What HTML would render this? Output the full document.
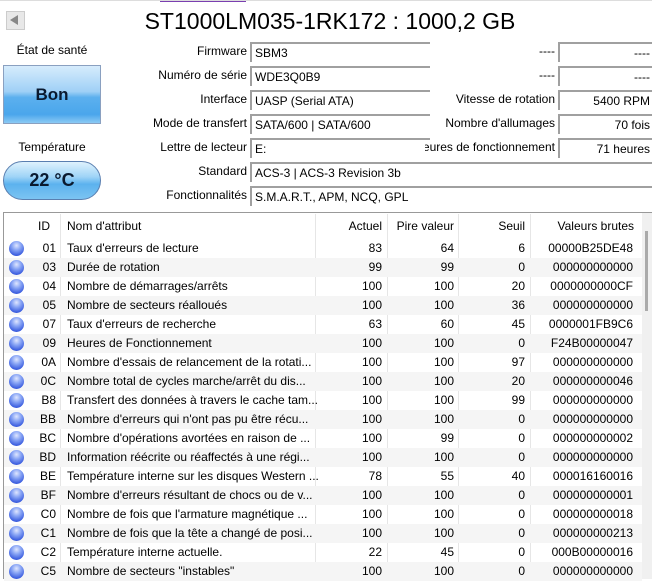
<!DOCTYPE html>
<html><head><meta charset="utf-8"><style>
*{margin:0;padding:0;box-sizing:border-box}
body{width:652px;height:579px;background:#fff;font-family:"Liberation Sans",sans-serif;font-size:12px;color:#000;position:relative;overflow:hidden}
.a{position:absolute;white-space:nowrap}
.lbl{position:absolute;text-align:right;white-space:nowrap}
.box{position:absolute;height:20px;border-top:2px solid #a0a0a0;border-left:2px solid #a0a0a0;padding:2px 0 0 3px;white-space:nowrap}
.row{position:absolute;left:4px;width:638px;height:19px}
.row.alt{background:#f5f5f5}
.c{position:absolute;top:2px;white-space:nowrap}
.r{text-align:right}
.dot{position:absolute;left:5px;top:2px;width:15px;height:15px;border-radius:50%;background:radial-gradient(circle at 50% 30%,#dfe6ff 0,#8aa6f5 35%,#3d5fe0 75%,#2a46c0 100%)}
.vl{position:absolute;top:214px;width:1px;height:365px;background:#e6e6e6}
</style></head><body>
<div class="a" style="left:160px;top:0;width:86px;height:2px;background:#7a3fb0"></div>
<div class="a" style="left:0;top:0;width:652px;height:1px;background:#ddd"></div>
<div class="a" style="left:6px;top:11px;width:19px;height:19px;background:#e8e8e8;border:1px solid #ccc"></div>
<div class="a" style="left:10px;top:15px;width:0;height:0;border-top:5px solid transparent;border-bottom:5px solid transparent;border-right:8px solid #888"></div>
<div class="a" style="left:0;top:8px;width:652px;text-align:center;font-size:23px;padding-left:8px">ST1000LM035-1RK172 : 1000,2 GB</div>

<div class="a" style="left:0;top:43px;width:104px;text-align:center">État de santé</div>
<div class="a" style="left:3px;top:65px;width:98px;height:59px;border:1px solid #8aa0c0;background:linear-gradient(#d6ecfc 0,#9fd0f6 45%,#5cb0ee 55%,#4aa6ec 85%,#8ccaf4 100%);text-align:center;font-weight:bold;font-size:17px;line-height:57px;color:#0a1a30">Bon</div>
<div class="a" style="left:0;top:140px;width:104px;text-align:center">Température</div>
<div class="a" style="left:3px;top:161px;width:98px;height:39px;border:1px solid #5a7fb0;border-radius:20px;background:linear-gradient(#dff2fd 0,#9fd4f7 40%,#5cb2ee 60%,#7cc4f2 100%);text-align:center;font-weight:bold;font-size:18px;line-height:37px;color:#0a1a30">22 °C</div>

<div class="lbl" style="right:405px;top:44px">Firmware</div>
<div class="lbl" style="right:405px;top:68px">Numéro de série</div>
<div class="lbl" style="right:405px;top:92px">Interface</div>
<div class="lbl" style="right:405px;top:116px">Mode de transfert</div>
<div class="lbl" style="right:405px;top:140px">Lettre de lecteur</div>
<div class="lbl" style="right:405px;top:164px">Standard</div>
<div class="lbl" style="right:405px;top:188px">Fonctionnalités</div>
<div class="box" style="left:250px;top:42px;width:180px">SBM3</div>
<div class="box" style="left:250px;top:66px;width:180px">WDE3Q0B9</div>
<div class="box" style="left:250px;top:90px;width:180px">UASP (Serial ATA)</div>
<div class="box" style="left:250px;top:114px;width:180px">SATA/600 | SATA/600</div>
<div class="box" style="left:250px;top:138px;width:180px">E:</div>
<div class="box" style="left:250px;top:162px;width:402px">ACS-3 | ACS-3 Revision 3b</div>
<div class="box" style="left:250px;top:186px;width:402px">S.M.A.R.T., APM, NCQ, GPL</div>

<div class="lbl" style="right:97px;top:44px">----</div>
<div class="lbl" style="right:97px;top:68px">----</div>
<div class="lbl" style="right:97px;top:92px">Vitesse de rotation</div>
<div class="lbl" style="right:97px;top:116px">Nombre d'allumages</div>
<div class="lbl" style="right:97px;top:140px;width:130px;overflow:hidden;direction:rtl">Heures de fonctionnement</div>
<div class="box" style="left:558px;top:42px;width:94px;text-align:right;padding-right:2px">----</div>
<div class="box" style="left:558px;top:66px;width:94px;text-align:right;padding-right:2px">----</div>
<div class="box" style="left:558px;top:90px;width:94px;text-align:right;padding-right:2px">5400 RPM</div>
<div class="box" style="left:558px;top:114px;width:94px;text-align:right;padding-right:2px">70 fois</div>
<div class="box" style="left:558px;top:138px;width:94px;text-align:right;padding-right:2px">71 heures</div>

<div class="a" style="left:3px;top:212px;width:649px;height:367px;border-top:1px solid #999;border-left:1px solid #999"></div>
<div class="vl" style="left:60px"></div><div class="vl" style="left:315px"></div><div class="vl" style="left:387px"></div><div class="vl" style="left:458px"></div><div class="vl" style="left:530px"></div>
<div class="a" style="left:642px;top:213px;width:10px;height:366px;background:#f0f0f0"></div>
<div class="a" style="left:645px;top:231px;width:3px;height:80px;background:#aaa"></div>

<div class="row" style="top:217px">
<div class="c" style="left:34px">ID</div><div class="c" style="left:63px">Nom d'attribut</div>
<div class="c r" style="left:311px;width:67px">Actuel</div><div class="c r" style="left:383px;width:67px">Pire valeur</div>
<div class="c r" style="left:454px;width:67px">Seuil</div><div class="c r" style="left:526px;width:104px">Valeurs brutes</div></div>

<div id="rows"></div>
<script>
var d=[["01","Taux d'erreurs de lecture","83","64","6","00000B25DE48"],
["03","Durée de rotation","99","99","0","000000000000"],
["04","Nombre de démarrages/arrêts","100","100","20","0000000000CF"],
["05","Nombre de secteurs réalloués","100","100","36","000000000000"],
["07","Taux d'erreurs de recherche","63","60","45","0000001FB9C6"],
["09","Heures de Fonctionnement","100","100","0","F24B00000047"],
["0A","Nombre d'essais de relancement de la rotati...","100","100","97","000000000000"],
["0C","Nombre total de cycles marche/arrêt du dis...","100","100","20","000000000046"],
["B8","Transfert des données à travers le cache tam...","100","100","99","000000000000"],
["BB","Nombre d'erreurs qui n'ont pas pu être récu...","100","100","0","000000000000"],
["BC","Nombre d'opérations avortées en raison de ...","100","99","0","000000000002"],
["BD","Information réécrite ou réaffectés à une régi...","100","100","0","000000000000"],
["BE","Température interne sur les disques Western ...","78","55","40","000016160016"],
["BF","Nombre d'erreurs résultant de chocs ou de v...","100","100","0","000000000001"],
["C0","Nombre de fois que l'armature magnétique ...","100","100","0","000000000018"],
["C1","Nombre de fois que la tête a changé de posi...","100","100","0","000000000213"],
["C2","Température interne actuelle.","22","45","0","000B00000016"],
["C5","Nombre de secteurs \"instables\"","100","100","0","000000000000"]];
var h="";
d.forEach(function(r,i){
h+='<div class="row'+(i%2?' alt':'')+'" style="top:'+(239+i*19)+'px"><div class="dot"></div>'+
'<div class="c r" style="left:28px;width:24px">'+r[0]+'</div><div class="c" style="left:63px">'+r[1].replace(/</g,"&lt;")+'</div>'+
'<div class="c r" style="left:311px;width:67px">'+r[2]+'</div><div class="c r" style="left:383px;width:67px">'+r[3]+'</div>'+
'<div class="c r" style="left:454px;width:67px">'+r[4]+'</div><div class="c r" style="left:526px;width:103px">'+r[5]+'</div></div>';});
document.getElementById("rows").innerHTML=h;
</script>
</body></html>
